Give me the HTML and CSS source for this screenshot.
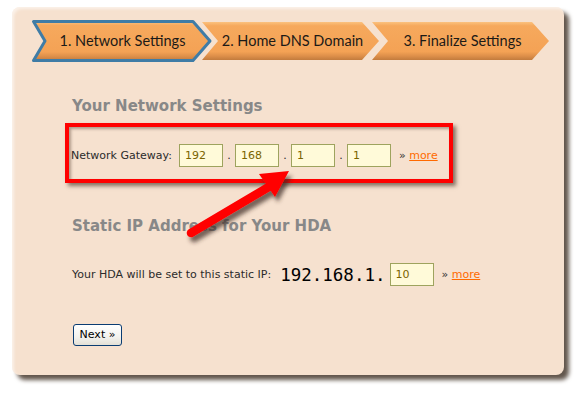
FILE: index.html
```html
<!DOCTYPE html>
<html>
<head>
<meta charset="utf-8">
<link rel="stylesheet" href="styles.css">
</head>
<body>
<div class="panel">
  <ul class="steps">
    <li class="step active">
      <svg class="step-bg" width="177" height="38" viewBox="0 0 177 38">
        <defs>
          <linearGradient id="g1" x1="0" y1="0" x2="0" y2="1">
            <stop offset="0" stop-color="#fbc27f"/>
            <stop offset="0.1" stop-color="#f6a95d"/>
            <stop offset="0.78" stop-color="#f4a255"/>
            <stop offset="0.9" stop-color="#dc8e49"/>
            <stop offset="1" stop-color="#c27b3d"/>
          </linearGradient>
        </defs>
        <polygon points="1.5,-0.5 161,-0.5 178,19 161,38.5 1.5,38.5 13,19" fill="url(#g1)" stroke="#3f7ca6" stroke-width="3" stroke-linejoin="round"/>
      </svg>
      <span>1. Network Settings</span>
    </li>
    <li class="step">
      <svg class="step-bg" width="177" height="38" viewBox="0 0 177 38">
        <polygon points="0,0 160,0 177,19 160,38 0,38 16,19" fill="url(#g1)"/>
      </svg>
      <span>2. Home DNS Domain</span>
    </li>
    <li class="step">
      <svg class="step-bg" width="177" height="38" viewBox="0 0 177 38">
        <polygon points="0,0 160,0 177,19 160,38 0,38 16,19" fill="url(#g1)"/>
      </svg>
      <span>3. Finalize Settings</span>
    </li>
  </ul>

  <h2 class="section-title first">Your Network Settings</h2>
  <div class="row gateway">
    <label>Network Gateway:</label>
    <input class="octet" type="text" value="192">
    <span class="dot">.</span>
    <input class="octet" type="text" value="168">
    <span class="dot">.</span>
    <input class="octet" type="text" value="1">
    <span class="dot">.</span>
    <input class="octet" type="text" value="1">
    <span class="more">» <a href="#">more</a></span>
  </div>

  <h2 class="section-title second">Static IP Address for Your HDA</h2>
  <div class="row static">
    <label>Your HDA will be set to this static IP:</label>
    <span class="ip">192.168.1.</span>
    <input class="octet" type="text" value="10">
    <span class="more">» <a href="#">more</a></span>
  </div>

  <div class="actions">
    <button class="next" type="button">Next »</button>
  </div>

  <div class="highlight-box"></div>
  <svg class="pointer" width="140" height="90" viewBox="0 0 140 90">
    <defs>
      <filter id="sh" x="-20%" y="-20%" width="150%" height="160%">
        <feDropShadow dx="3" dy="5" stdDeviation="2.2" flood-color="#3a2a20" flood-opacity="0.7"/>
      </filter>
    </defs>
    <g filter="url(#sh)">
      <line x1="14" y1="66" x2="95" y2="18" stroke="#ff0000" stroke-width="8.5" stroke-linecap="round"/>
      <polygon points="112,4 82,7 98,30" fill="#ff0000"/>
    </g>
  </svg>
</div>
</body>
</html>
```

FILE: styles.css
```css
html, body {
  margin: 0;
  padding: 0;
  background: #ffffff;
}

body {
  width: 585px;
  height: 398px;
  overflow: hidden;
  font-family: "DejaVu Sans", Verdana, sans-serif;
}

.panel {
  position: relative;
  margin: 7px 0 0 12px;
  width: 552px;
  height: 368px;
  box-sizing: border-box;
  border-radius: 8px;
  background: #f6e1cf;
  box-shadow: inset 2px 2px 3px rgba(255, 255, 255, 0.55), 5px 5px 4px #63574d;
  padding: 15px 0 0 60px;
}

.steps {
  list-style: none;
  margin: 0 0 0 -40px;
  padding: 0;
  display: flex;
  height: 38px;
}

.step {
  position: relative;
  width: 177px;
  height: 38px;
  margin-right: -7px;
  display: flex;
  align-items: center;
  justify-content: center;
  font-family: Lato, "Open Sans", sans-serif;
  font-size: 14.5px;
  color: #1c1a17;
}

.step.active {
  z-index: 2;
}

.step-bg {
  position: absolute;
  left: 0;
  top: 0;
  overflow: visible;
}

.step span {
  position: relative;
  padding-left: 4px;
  margin-top: -2px;
}

.section-title {
  margin: 0;
  font-family: "DejaVu Sans", Verdana, sans-serif;
  font-weight: bold;
  font-size: 15px;
  line-height: 18px;
  color: #888888;
}

.section-title.first {
  margin-top: 37px;
}

.section-title.second {
  margin-top: 50px;
}

.row {
  display: flex;
  align-items: center;
  font-family: "DejaVu Sans", Tahoma, sans-serif;
  font-size: 11px;
  color: #2b2b2b;
}

.row.gateway {
  margin-top: 29px;
  margin-left: -1px;
}

.row.static {
  margin-top: 28px;
}

.row label {
  margin-right: 7px;
}

.octet {
  box-sizing: border-box;
  width: 44px;
  height: 23px;
  border: 1px solid #9ea35e;
  background: #fffad9;
  color: #7a6400;
  font-family: "DejaVu Sans", Tahoma, sans-serif;
  font-size: 11px;
  padding: 0 5px;
  margin: 0;
  outline: none;
}

.dot {
  width: 12px;
  text-align: center;
}

.more {
  margin-left: 8px;
  color: #333;
}

.more a {
  color: #ff6a00;
  text-decoration: underline;
}

.static label {
  margin-right: 9px;
}

.ip {
  font-family: "DejaVu Sans Mono", "Lucida Console", monospace;
  font-size: 17.5px;
  color: #000;
  margin-right: 4px;
}

.actions {
  margin-top: 37px;
}

.next {
  box-sizing: border-box;
  margin-left: 1px;
  width: 49px;
  height: 22px;
  padding: 0;
  border: 1px solid #0a3c72;
  border-radius: 3px;
  background: linear-gradient(#ffffff, #f3f2ee 60%, #e3e0d6);
  font-family: "DejaVu Sans", Tahoma, sans-serif;
  font-size: 11px;
  color: #000;
}

.highlight-box {
  position: absolute;
  left: 53px;
  top: 116px;
  width: 388px;
  height: 60px;
  box-sizing: border-box;
  border: 4px solid #ff0000;
  box-shadow: 3px 3px 4px rgba(40, 20, 10, 0.55), inset 2px 2px 3px rgba(40, 20, 10, 0.35);
}

.pointer {
  position: absolute;
  left: 165px;
  top: 160px;
  overflow: visible;
}
```
